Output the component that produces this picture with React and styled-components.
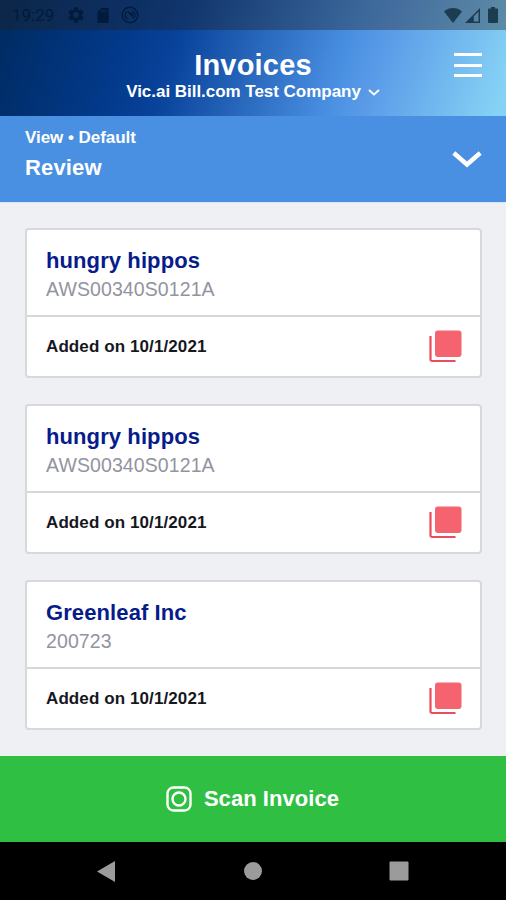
import styled, { createGlobalStyle } from "styled-components";

const GlobalStyle = createGlobalStyle`
*{
  box-sizing:border-box;
}
body{
  margin:0;
  font-family:"Liberation Sans", Arial, sans-serif;
}
`;

const Screen = styled.div`
width:506px;
height:900px;
display:flex;
flex-direction:column;
overflow:hidden;
background-color:#eff0f4;
`;

const Top = styled.div`
height:116px;
flex-shrink:0;
background:linear-gradient(108deg, #002a60 0%, #033a8c 26%, #08429a 35%, #4a90e2 67%, #5b9ce8 74%, #86d2f5 98%);
`;

const StatusBar = styled.div`
height:30px;
display:flex;
align-items:center;
justify-content:space-between;
padding:0 8px 0 12px;
background-color:rgba(32,32,32,0.37);
`;

const StatusGroup = styled.div`
display:flex;
align-items:center;
color:${(props) => props.$color};
`;

const Clock = styled.span`
width:56px;
font-family:Roboto, sans-serif;
font-size:17px;
line-height:30px;
`;

const Icon = styled.svg`
display:block;
flex-shrink:0;
margin-left:${(props) => props.$gap || 0}px;
`;

const Header = styled.header`
height:86px;
display:grid;
grid-template-columns:60px 1fr 60px;
padding-top:19px;
color:white;
`;

const Heading = styled.div`
grid-column:2;
display:flex;
flex-direction:column;
align-items:center;
`;

const Title = styled.h1`
margin:0;
font-size:29px;
line-height:32px;
letter-spacing:0.2px;
`;

const Company = styled.div`
display:flex;
align-items:center;
padding-top:1px;
font-size:17px;
font-weight:700;
line-height:20px;
letter-spacing:-0.03px;
white-space:nowrap;
`;

const MenuButton = styled.button`
width:28px;
height:24px;
margin:4px 0 0 8px;
padding:0;
border:none;
background:none;
display:flex;
flex-direction:column;
justify-content:space-between;
`;

const MenuLine = styled.span`
width:28px;
height:3px;
background-color:white;
`;

const ViewBar = styled.div`
height:87px;
flex-shrink:0;
display:flex;
justify-content:space-between;
padding:12px 24px 0 25px;
background-color:#4a90e2;
border-bottom:1px solid #d6e5f7;
color:white;
`;

const ViewLabel = styled.div`
font-size:17px;
font-weight:700;
line-height:20px;
letter-spacing:-0.04px;
`;

const ViewName = styled.div`
margin-top:8px;
font-size:22px;
font-weight:700;
line-height:24px;
letter-spacing:0.15px;
`;

const List = styled.main`
flex:1;
display:flex;
flex-direction:column;
gap:26px;
padding:25px 24px 0 25px;
`;

const Card = styled.article`
height:150px;
background-color:white;
border:2px solid #d6d8dc;
border-radius:4px;
`;

const CardHead = styled.div`
height:87px;
padding:18px 19px 0;
border-bottom:2px solid #d6d8dc;
`;

const Vendor = styled.h2`
margin:0;
color:#071c8a;
font-size:22px;
line-height:25px;
letter-spacing:0.1px;
`;

const Number = styled.div`
margin-top:4px;
color:#92949f;
font-size:19.5px;
line-height:24px;
letter-spacing:0.1px;
`;

const CardFoot = styled.div`
height:59px;
display:flex;
align-items:center;
justify-content:space-between;
padding:0 18px 0 19px;
`;

const Added = styled.div`
color:#17171f;
font-size:17px;
font-weight:700;
line-height:20px;
letter-spacing:0.1px;
`;

const ScanButton = styled.button`
height:86px;
flex-shrink:0;
display:flex;
align-items:center;
justify-content:center;
gap:12px;
padding:0 1px 0 0;
border:none;
background-color:#2fbf43;
color:white;
font-family:inherit;
font-size:22px;
font-weight:700;
line-height:26px;
letter-spacing:0.06px;
`;

const NavBar = styled.nav`
height:58px;
flex-shrink:0;
display:grid;
grid-template-columns:180px 146px 180px;
align-items:center;
background-color:black;
`;

const NavItem = styled.div`
display:flex;
justify-content:${(props) => props.$align || "center"};
padding:${(props) => props.$pad || "0"};
`;

const invoices = [
  { id: 1, vendor: "hungry hippos", number: "AWS00340S0121A", added: "10/1/2021" },
  { id: 2, vendor: "hungry hippos", number: "AWS00340S0121A", added: "10/1/2021" },
  { id: 3, vendor: "Greenleaf Inc", number: "200723", added: "10/1/2021" },
];

const PagesIcon = () => (
  <Icon width="33" height="33" viewBox="0 0 33 33">
    <rect x="6" y="0.5" width="26.5" height="26.5" rx="3" fill="#f5646e" />
    <path d="M1.5 6v23.5a1.5 1.5 0 0 0 1.5 1.5h23.5" fill="none" stroke="#ea4d5c" strokeWidth="2.2" />
  </Icon>
);

const App = () => {
  return (
    <>
      <GlobalStyle />
      <Screen>
        <Top>
          <StatusBar>
            <StatusGroup $color="#021a3c">
              <Clock>19:29</Clock>
              <Icon width="16" height="18" viewBox="2 2 20 20" fill="currentColor">
                <path d="M19.14 12.94a7 7 0 0 0 0-1.88l2.03-1.58a.5.5 0 0 0 .12-.61l-1.92-3.32a.5.5 0 0 0-.59-.22l-2.39.96a7 7 0 0 0-1.62-.94l-.36-2.54a.5.5 0 0 0-.48-.41h-3.84a.5.5 0 0 0-.47.41l-.36 2.54a7 7 0 0 0-1.62.94l-2.39-.96a.5.5 0 0 0-.59.22L2.74 8.87a.5.5 0 0 0 .12.61l2.03 1.58a7 7 0 0 0 0 1.88l-2.03 1.58a.5.5 0 0 0-.12.61l1.92 3.32c.12.22.37.29.59.22l2.39-.96c.5.38 1.03.7 1.62.94l.36 2.54c.05.24.24.41.48.41h3.84c.24 0 .44-.17.47-.41l.36-2.54a7 7 0 0 0 1.62-.94l2.39.96c.22.08.47 0 .59-.22l1.92-3.32a.5.5 0 0 0-.12-.61zM12 15.6a3.6 3.6 0 1 1 0-7.2 3.6 3.6 0 0 1 0 7.2z" />
              </Icon>
              <Icon $gap={13} width="12" height="15" viewBox="0 0 12 16" fill="currentColor">
                <path fillRule="evenodd" d="M4.5 0H11a1 1 0 0 1 1 1v14a1 1 0 0 1-1 1H1a1 1 0 0 1-1-1V4.5zM4 2.5v2h1.2v-2zm2.2 0v2h1.2v-2zm2.2 0v2h1.2v-2z" />
              </Icon>
              <Icon $gap={12} width="18" height="18" viewBox="0 0 18 18" fill="none" stroke="currentColor">
                <circle cx="9" cy="9" r="7.8" strokeWidth="1.4" />
                <path d="M6.500 13.200A4.900 4.900 0 0 1 5.500 5.600M11.500 4.800A4.900 4.900 0 0 1 12.500 12.400" strokeWidth="1.3" />
                <path d="M5.500 5l6.500 2.200v4.800L5.500 5z" fill="currentColor" stroke="none" />
              </Icon>
            </StatusGroup>
            <StatusGroup $color="#1c3c50">
              <Icon width="18" height="15" viewBox="0 0 18 15" fill="currentColor">
                <path d="M0 3.4C5-1.1 13-1.1 18 3.4L9 15z" />
              </Icon>
              <Icon $gap={3} width="15" height="15" viewBox="0 0 15 15" fill="currentColor">
                <path fillRule="evenodd" d="M15 0v15H0zM13.5 3.6L8.8 8.3v5.2h4.7z" />
              </Icon>
              <Icon $gap={8} width="10" height="16" viewBox="0 0 10 16" fill="currentColor">
                <path d="M3 0h4v1.6h2a1 1 0 0 1 1 1V15a1 1 0 0 1-1 1H1a1 1 0 0 1-1-1V2.600a1 1 0 0 1 1-1h2z" />
              </Icon>
            </StatusGroup>
          </StatusBar>
          <Header>
            <Heading>
              <Title>Invoices</Title>
              <Company>
                Vic.ai Bill.com Test Company
                <Icon $gap={7} width="12" height="8" viewBox="0 0 12 8" fill="none" stroke="currentColor" strokeWidth="1.8">
                  <path d="M1 2l5 4.500L11 2" />
                </Icon>
              </Company>
            </Heading>
            <MenuButton aria-label="Menu">
              <MenuLine />
              <MenuLine />
              <MenuLine />
            </MenuButton>
          </Header>
        </Top>
        <ViewBar>
          <div>
            <ViewLabel>View • Default</ViewLabel>
            <ViewName>Review</ViewName>
          </div>
          <Icon width="30" height="64" viewBox="0 0 30 64" fill="none" stroke="white" strokeWidth="4.4">
            <path d="M1.800 25L15 36.500L28.200 25" />
          </Icon>
        </ViewBar>
        <List>
          {invoices.map((invoice) => (
            <Card key={invoice.id}>
              <CardHead>
                <Vendor>{invoice.vendor}</Vendor>
                <Number>{invoice.number}</Number>
              </CardHead>
              <CardFoot>
                <Added>Added on {invoice.added}</Added>
                <PagesIcon />
              </CardFoot>
            </Card>
          ))}
        </List>
        <ScanButton>
          <Icon width="26" height="26" viewBox="0 0 26 26" fill="none" stroke="currentColor" strokeWidth="2.4">
            <rect x="1.500" y="1.500" width="23" height="23" rx="6" />
            <circle cx="13" cy="13" r="6.500" />
          </Icon>
          Scan Invoice
        </ScanButton>
        <NavBar>
          <NavItem $align="flex-start" $pad="0 0 0 97px">
            <Icon width="18" height="21" viewBox="0 0 18 21" fill="#9b9b9b">
              <path d="M18 0v21L0 10.500z" />
            </Icon>
          </NavItem>
          <NavItem>
            <Icon width="18" height="18" viewBox="0 0 18 18" fill="#9b9b9b">
              <circle cx="9" cy="9" r="9" />
            </Icon>
          </NavItem>
          <NavItem $align="flex-start" $pad="0 0 0 63px">
            <Icon width="20" height="20" viewBox="0 0 20 20" fill="#9b9b9b">
              <rect x="0.500" y="0.500" width="19" height="19" rx="1" />
            </Icon>
          </NavItem>
        </NavBar>
      </Screen>
    </>
  );
};

export default App;
